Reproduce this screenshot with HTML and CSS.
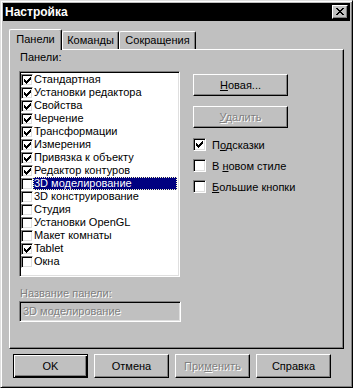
FILE: index.html
```html
<!DOCTYPE html>
<html>
<head>
<meta charset="utf-8">
<link rel="stylesheet" href="styles.css">
</head>
<body>
<div class="window">
  <div class="titlebar">
    <span class="title">Настройка</span>
    <div class="close">
      <svg width="8" height="7" viewBox="0 0 8 7" shape-rendering="crispEdges"><path d="M0 0h2v1h-2zM6 0h2v1h-2zM1 1h2v1h-2zM5 1h2v1h-2zM2 2h4v1h-4zM3 3h2v1h-2zM2 4h4v1h-4zM1 5h2v1h-2zM5 5h2v1h-2zM0 6h2v1h-2zM6 6h2v1h-2z" fill="#000"/></svg>
    </div>
  </div>
  <div class="tabs">
    <div class="tab active t1">Панели</div>
    <div class="tab t2">Команды</div>
    <div class="tab t3">Сокращения</div>
  </div>
  <div class="panel">
    <div class="label">Панели:</div>
    <div class="main">
      <div class="listbox">
        <div class="item"><span class="cb on"><svg width="7" height="7" viewBox="0 0 7 7" shape-rendering="crispEdges"><path d="M6 0h1v1h-1zM5 1h2v1h-2zM0 2h1v1h-1zM4 2h3v1h-3zM0 3h2v1h-2zM3 3h3v1h-3zM0 4h5v1h-5zM1 5h3v1h-3zM2 6h1v1h-1z"/></svg></span><span class="txt">Стандартная</span></div>
        <div class="item"><span class="cb on"><svg width="7" height="7" viewBox="0 0 7 7" shape-rendering="crispEdges"><path d="M6 0h1v1h-1zM5 1h2v1h-2zM0 2h1v1h-1zM4 2h3v1h-3zM0 3h2v1h-2zM3 3h3v1h-3zM0 4h5v1h-5zM1 5h3v1h-3zM2 6h1v1h-1z"/></svg></span><span class="txt">Установки редактора</span></div>
        <div class="item"><span class="cb on"><svg width="7" height="7" viewBox="0 0 7 7" shape-rendering="crispEdges"><path d="M6 0h1v1h-1zM5 1h2v1h-2zM0 2h1v1h-1zM4 2h3v1h-3zM0 3h2v1h-2zM3 3h3v1h-3zM0 4h5v1h-5zM1 5h3v1h-3zM2 6h1v1h-1z"/></svg></span><span class="txt">Свойства</span></div>
        <div class="item"><span class="cb on"><svg width="7" height="7" viewBox="0 0 7 7" shape-rendering="crispEdges"><path d="M6 0h1v1h-1zM5 1h2v1h-2zM0 2h1v1h-1zM4 2h3v1h-3zM0 3h2v1h-2zM3 3h3v1h-3zM0 4h5v1h-5zM1 5h3v1h-3zM2 6h1v1h-1z"/></svg></span><span class="txt">Черчение</span></div>
        <div class="item"><span class="cb on"><svg width="7" height="7" viewBox="0 0 7 7" shape-rendering="crispEdges"><path d="M6 0h1v1h-1zM5 1h2v1h-2zM0 2h1v1h-1zM4 2h3v1h-3zM0 3h2v1h-2zM3 3h3v1h-3zM0 4h5v1h-5zM1 5h3v1h-3zM2 6h1v1h-1z"/></svg></span><span class="txt">Трансформации</span></div>
        <div class="item"><span class="cb on"><svg width="7" height="7" viewBox="0 0 7 7" shape-rendering="crispEdges"><path d="M6 0h1v1h-1zM5 1h2v1h-2zM0 2h1v1h-1zM4 2h3v1h-3zM0 3h2v1h-2zM3 3h3v1h-3zM0 4h5v1h-5zM1 5h3v1h-3zM2 6h1v1h-1z"/></svg></span><span class="txt">Измерения</span></div>
        <div class="item"><span class="cb on"><svg width="7" height="7" viewBox="0 0 7 7" shape-rendering="crispEdges"><path d="M6 0h1v1h-1zM5 1h2v1h-2zM0 2h1v1h-1zM4 2h3v1h-3zM0 3h2v1h-2zM3 3h3v1h-3zM0 4h5v1h-5zM1 5h3v1h-3zM2 6h1v1h-1z"/></svg></span><span class="txt">Привязка к объекту</span></div>
        <div class="item"><span class="cb on"><svg width="7" height="7" viewBox="0 0 7 7" shape-rendering="crispEdges"><path d="M6 0h1v1h-1zM5 1h2v1h-2zM0 2h1v1h-1zM4 2h3v1h-3zM0 3h2v1h-2zM3 3h3v1h-3zM0 4h5v1h-5zM1 5h3v1h-3zM2 6h1v1h-1z"/></svg></span><span class="txt">Редактор контуров</span></div>
        <div class="item sel"><span class="cb"></span><span class="txt">3D моделирование</span></div>
        <div class="item"><span class="cb"></span><span class="txt">3D конструирование</span></div>
        <div class="item"><span class="cb"></span><span class="txt">Студия</span></div>
        <div class="item"><span class="cb"></span><span class="txt">Установки OpenGL</span></div>
        <div class="item"><span class="cb"></span><span class="txt">Макет комнаты</span></div>
        <div class="item"><span class="cb on"><svg width="7" height="7" viewBox="0 0 7 7" shape-rendering="crispEdges"><path d="M6 0h1v1h-1zM5 1h2v1h-2zM0 2h1v1h-1zM4 2h3v1h-3zM0 3h2v1h-2zM3 3h3v1h-3zM0 4h5v1h-5zM1 5h3v1h-3zM2 6h1v1h-1z"/></svg></span><span class="txt">Tablet</span></div>
        <div class="item"><span class="cb"></span><span class="txt">Окна</span></div>
      </div>
      <div class="side">
        <div class="btn wide"><span><u>Н</u>овая...</span></div>
        <div class="btn wide gap disabled"><span><u>У</u>далить</span></div>
        <div class="chk first"><span class="cb3"><svg width="7" height="7" viewBox="0 0 7 7" shape-rendering="crispEdges"><path d="M6 0h1v1h-1zM5 1h2v1h-2zM0 2h1v1h-1zM4 2h3v1h-3zM0 3h2v1h-2zM3 3h3v1h-3zM0 4h5v1h-5zM1 5h3v1h-3zM2 6h1v1h-1z"/></svg></span><span class="clabel">П<u>о</u>дсказки</span></div>
        <div class="chk"><span class="cb3"></span><span class="clabel">В <u>н</u>овом стиле</span></div>
        <div class="chk"><span class="cb3"></span><span class="clabel"><u>Б</u>ольшие кнопки</span></div>
      </div>
    </div>
    <div class="label disabled lower">Название панели:</div>
    <div class="edit disabled">3D моделирование</div>
  </div>
  <div class="buttons">
    <div class="btn bottom default">OK</div>
    <div class="btn bottom">Отмена</div>
    <div class="btn bottom disabled"><span>При<u>м</u>енить</span></div>
    <div class="btn bottom">Справка</div>
  </div>
</div>
</body>
</html>
```

FILE: styles.css
```css
html, body {
  margin: 0;
  padding: 0;
  background: #c0c0c0;
}

body {
  font-family: "Liberation Sans", Arial, sans-serif;
  font-size: 11px;
  color: #000;
}

.window {
  width: 353px;
  height: 388px;
  box-sizing: border-box;
  background: #c0c0c0;
  border: 1px solid;
  border-color: #dfdfdf #000 #000 #dfdfdf;
  box-shadow: inset 1px 1px #fff, inset -1px -1px #808080;
  padding: 2px;
  display: flex;
  flex-direction: column;
}

.titlebar {
  height: 18px;
  background: #000;
  display: flex;
  align-items: center;
  padding: 0 2px;
  flex-shrink: 0;
}

.title {
  flex: 1;
  color: #fff;
  font-weight: bold;
  font-size: 12px;
  line-height: 18px;
}

.close {
  width: 16px;
  height: 14px;
  box-sizing: border-box;
  background: #c0c0c0;
  border: 1px solid;
  border-color: #fff #000 #000 #fff;
  box-shadow: inset -1px -1px #808080;
  padding: 2px 0 0 3px;
}

.close svg {
  display: block;
}

.tabs {
  display: flex;
  align-items: flex-end;
  height: 20px;
  margin: 8px 0 0 6px;
  position: relative;
  z-index: 1;
  flex-shrink: 0;
}

.tab {
  height: 18px;
  box-sizing: border-box;
  border-top: 1px solid #fff;
  border-left: 1px solid #fff;
  border-right: 1px solid #000;
  box-shadow: inset -1px 0 #808080;
  border-radius: 2px 2px 0 0;
  text-align: center;
  line-height: 16px;
  background: #c0c0c0;
}

.tab.active {
  height: 21px;
  margin-bottom: -1px;
  line-height: 18px;
}

.t1 { width: 53px; }
.t2 { width: 57px; }
.t3 { width: 77px; }

.panel {
  margin-left: 6px;
  width: 335px;
  height: 300px;
  box-sizing: border-box;
  border: 1px solid;
  border-color: #fff #000 #000 #fff;
  box-shadow: inset -1px -1px #808080;
  padding: 1px 0 0 9px;
  flex-shrink: 0;
}

.label {
  line-height: 13px;
  height: 13px;
  margin-bottom: 7px;
  padding-left: 1px;
}

.label.lower {
  margin-top: 10px;
  margin-bottom: 1px;
}

.disabled {
  color: #808080;
  text-shadow: 1px 1px 0 #fff;
}

.main {
  display: flex;
}

.listbox {
  width: 161px;
  height: 206px;
  box-sizing: border-box;
  background: #fff;
  border: 1px solid;
  border-color: #808080 #fff #fff #808080;
  box-shadow: inset 1px 1px #000, inset -1px -1px #dfdfdf;
  padding: 1px 2px 1px 1px;
}

.item {
  height: 13px;
  display: flex;
  align-items: center;
}

.cb {
  width: 12px;
  height: 12px;
  box-sizing: border-box;
  flex-shrink: 0;
  background: #fff;
  border: 1px solid;
  border-color: #808080 #fff #fff #808080;
  box-shadow: inset 1px 1px #000, inset -1px -1px #dfdfdf;
  padding: 2px 0 0 2px;
  margin-top: 1px;
}

.cb svg, .cb3 svg {
  display: block;
}

.txt {
  flex: 1;
  height: 13px;
  box-sizing: border-box;
  border: 1px dotted transparent;
  line-height: 11px;
  padding-left: 0;
  white-space: nowrap;
}

.item.sel .txt {
  background: #000080;
  color: #fff;
  border-color: #ffffc0;
}

.side {
  margin-left: 13px;
  padding-top: 3px;
  display: flex;
  flex-direction: column;
}

.btn {
  box-sizing: border-box;
  background: #c0c0c0;
  border: 1px solid;
  border-color: #fff #000 #000 #fff;
  box-shadow: inset -1px -1px #808080;
  display: flex;
  align-items: center;
  justify-content: center;
  white-space: nowrap;
}

.btn.wide {
  width: 95px;
  height: 22px;
}

.btn.gap {
  margin-top: 10px;
}

.chk {
  height: 21px;
  display: flex;
  align-items: center;
}

.chk.first {
  margin-top: 6px;
}

.cb3 {
  width: 13px;
  height: 13px;
  box-sizing: border-box;
  background: #fff;
  border: 1px solid;
  border-color: #808080 #fff #fff #808080;
  box-shadow: inset 1px 1px #000, inset -1px -1px #dfdfdf;
  padding: 2px 0 0 2px;
  flex-shrink: 0;
}

.clabel {
  margin-left: 6px;
}

.edit {
  width: 162px;
  height: 21px;
  box-sizing: border-box;
  background: #c0c0c0;
  border: 1px solid;
  border-color: #808080 #fff #fff #808080;
  box-shadow: inset 1px 1px #000, inset -1px -1px #dfdfdf;
  padding: 0 0 0 3px;
  line-height: 19px;
}

.buttons {
  display: flex;
  gap: 6px;
  margin: 5px 0 0 10px;
}

.btn.bottom {
  width: 75px;
  height: 24px;
}

.btn.default {
  border-color: #000;
  box-shadow: inset 1px 1px #fff, inset -1px -1px #000, inset -2px -2px #808080;
}
```
